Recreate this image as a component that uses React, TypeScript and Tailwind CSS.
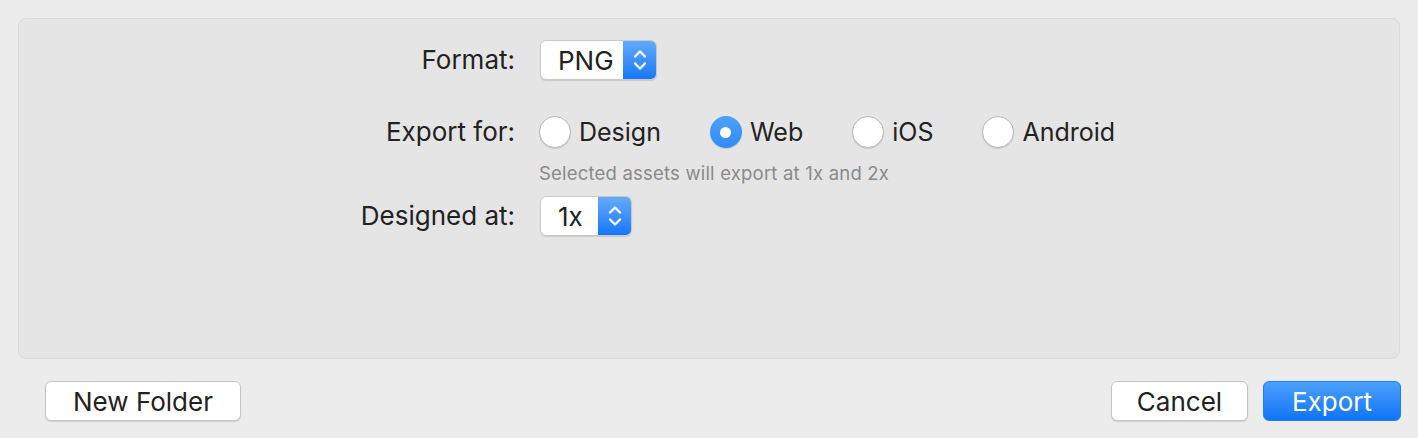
import React from "react";

const font = { fontFamily: "Inter, 'Noto Sans', 'Liberation Sans', sans-serif" };

function Chevrons() {
  return (
    <svg width="16" height="26" viewBox="0 0 16 26" fill="none" stroke="white" strokeWidth="2.3" strokeLinecap="round" strokeLinejoin="round">
      <path d="M3 9.5 L8 4.5 L13 9.5" />
      <path d="M3 16.5 L8 21.5 L13 16.5" />
    </svg>
  );
}

function Popup({ value, width }: { value: string; width: string }) {
  return (
    <div className={`flex h-[40px] ${width} rounded-[6px] border border-[#c9c9c9] bg-white shadow-[0_1px_1px_rgba(0,0,0,0.12)] overflow-hidden`}>
      <div className="flex-1 flex items-center pl-[17px] text-[26px] text-[#222]">{value}</div>
      <div className="w-[33px] flex items-center justify-center bg-gradient-to-b from-[#62aafd] to-[#1277f7]">
        <Chevrons />
      </div>
    </div>
  );
}

function Radio({ label, checked }: { label: string; checked?: boolean }) {
  return (
    <div className="flex items-center gap-[8px]">
      {checked ? (
        <div className="w-[32px] h-[32px] rounded-full bg-gradient-to-b from-[#4ea0fb] to-[#2f8cf6] flex items-center justify-center shadow-[0_1px_1px_rgba(0,0,0,0.15)]">
          <div className="w-[11px] h-[11px] rounded-full bg-white" />
        </div>
      ) : (
        <div className="w-[32px] h-[32px] rounded-full bg-white border border-[#b9b9b9] shadow-[0_1px_1px_rgba(0,0,0,0.12)]" />
      )}
      <span className="text-[25px] leading-[32px] text-[#222]">{label}</span>
    </div>
  );
}

function Button({ label, primary, width }: { label: string; primary?: boolean; width: string }) {
  return (
    <button
      className={`h-[40px] ${width} rounded-[6px] text-[26px] flex items-center justify-center ${
        primary
          ? "bg-gradient-to-b from-[#4aa0fd] to-[#0c74f5] text-white border border-[#1f7ff0]"
          : "bg-white text-[#222] border border-[#c6c6c6] shadow-[0_1px_1px_rgba(0,0,0,0.12)]"
      }`}
    >
      {label}
    </button>
  );
}

export default function App() {
  return (
    <div className="w-[1418px] h-[438px] bg-[#ececec] flex flex-col" style={font}>
      <div className="mx-[18px] mt-[18px] h-[341px] rounded-[8px] bg-[#e5e5e5] border border-[#dadada] pt-[21px]">
        <div className="grid grid-cols-[496px_1fr] gap-x-[25px] items-center">
          <div className="text-right text-[26px] text-[#222] leading-[40px]">Format:</div>
          <div className="flex">
            <Popup value="PNG" width="w-[117px]" />
          </div>

          <div className="text-right text-[26px] text-[#222] mt-[36px] leading-[32px]">Export for:</div>
          <div className="flex items-center gap-[49px] mt-[36px] -ml-[1px]">
            <Radio label="Design" />
            <Radio label="Web" checked />
            <Radio label="iOS" />
            <Radio label="Android" />
          </div>

          <div />
          <div className="text-[18.5px] tracking-[0.2px] text-[#8a8a8a] mt-[14px] -ml-[1px] leading-[22px]">
            Selected assets will export at 1x and 2x
          </div>

          <div className="text-right text-[26px] text-[#222] mt-[12px] leading-[40px]">Designed at:</div>
          <div className="flex mt-[12px]">
            <Popup value="1x" width="w-[92px]" />
          </div>
        </div>
      </div>
      <div className="flex items-center justify-between pl-[45px] pr-[17px] mt-[22px]">
        <Button label="New Folder" width="w-[196px]" />
        <div className="flex gap-[15px]">
          <Button label="Cancel" width="w-[137px]" />
          <Button label="Export" primary width="w-[138px]" />
        </div>
      </div>
    </div>
  );
}
